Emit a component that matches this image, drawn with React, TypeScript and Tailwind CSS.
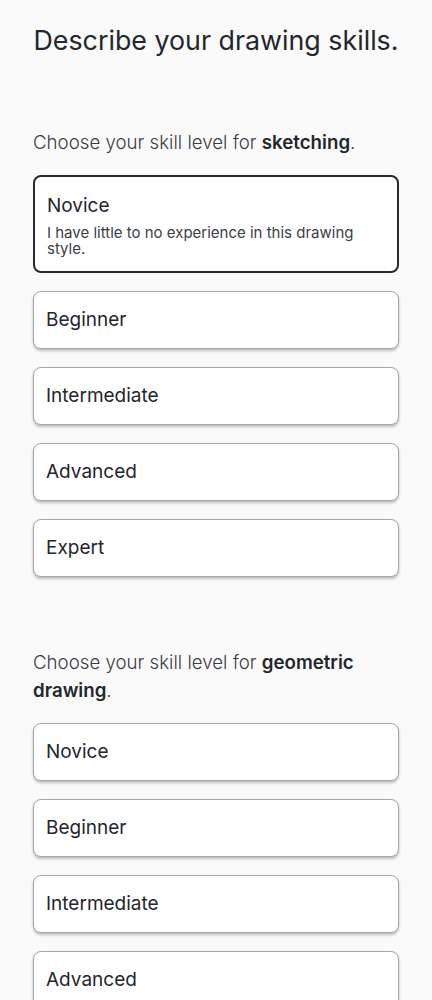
const levels = [
  { name: "Novice", desc: "I have little to no experience in this drawing style." },
  { name: "Beginner" },
  { name: "Intermediate" },
  { name: "Advanced" },
  { name: "Expert" },
];

type Option = { name: string; desc?: string };

function OptionCard({ option, selected }: { option: Option; selected: boolean }) {
  return (
    <button
      className={
        selected
          ? "w-full rounded-lg border-2 border-[#262a33] bg-white px-[12px] pt-[15px] pb-[14px] text-left"
          : "w-full rounded-lg border border-[#a3a6ad] bg-white px-[12px] py-[14px] text-left shadow-[0_2px_3px_rgba(0,0,0,0.25)]"
      }
    >
      <div className="text-[19px] leading-[28px] text-[#23262d]">{option.name}</div>
      {selected && option.desc && (
        <div className="mt-[5px] text-[15px] leading-[16px] text-[#3b3e45]">{option.desc}</div>
      )}
    </button>
  );
}

function Section({ topic, selected }: { topic: string; selected?: number }) {
  return (
    <section className="flex flex-col">
      <p className="text-[18.7px] font-light leading-[28px] text-[#3a3d44]">
        Choose your skill level for <span className="font-semibold text-[#23262d]">{topic}</span>.
      </p>
      <div className="mt-[18px] flex flex-col gap-[18px]">
        {levels.map((l, i) => (
          <OptionCard key={l.name} option={l} selected={i === selected} />
        ))}
      </div>
    </section>
  );
}

export default function App() {
  return (
    <div className="min-h-screen bg-[#fafafa] px-[33px] pt-[20px] pb-10 font-['Inter',sans-serif]">
      <h1 className="whitespace-nowrap text-center text-[26.8px] leading-[40px] text-[#23262d]">Describe your drawing skills.</h1>
      <div className="mt-[69px] flex flex-col gap-[72px]">
        <Section topic="sketching" selected={0} />
        <Section topic="geometric drawing" />
      </div>
    </div>
  );
}
